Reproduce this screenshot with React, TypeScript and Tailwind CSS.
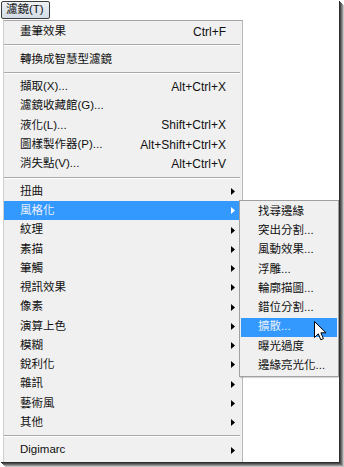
import React from "react";

type Item =
  | { kind: "sep" }
  | { kind: "row"; label: string; sc?: string; arrow?: boolean; hi?: boolean };

const R = (label: string, sc?: string, arrow?: boolean, hi?: boolean): Item => ({
  kind: "row",
  label,
  sc,
  arrow,
  hi,
});
const S: Item = { kind: "sep" };

const mainItems: Item[] = [
  R("畫筆效果", "Ctrl+F"),
  S,
  R("轉換成智慧型濾鏡"),
  S,
  R("擷取(X)...", "Alt+Ctrl+X"),
  R("濾鏡收藏館(G)..."),
  R("液化(L)...", "Shift+Ctrl+X"),
  R("圖樣製作器(P)...", "Alt+Shift+Ctrl+X"),
  R("消失點(V)...", "Alt+Ctrl+V"),
  S,
  R("扭曲", undefined, true),
  R("風格化", undefined, true, true),
  R("紋理", undefined, true),
  R("素描", undefined, true),
  R("筆觸", undefined, true),
  R("視訊效果", undefined, true),
  R("像素", undefined, true),
  R("演算上色", undefined, true),
  R("模糊", undefined, true),
  R("銳利化", undefined, true),
  R("雜訊", undefined, true),
  R("藝術風", undefined, true),
  R("其他", undefined, true),
  S,
  R("Digimarc", undefined, true),
];

const subItems = [
  "找尋邊緣",
  "突出分割...",
  "風動效果...",
  "浮雕...",
  "輪廓描圖...",
  "錯位分割...",
  "擴散...",
  "曝光過度",
  "邊緣亮光化...",
];

const FONT = "font-['Liberation_Sans','Noto_Sans_CJK_TC',sans-serif]";

function Arrow({ white }: { white?: boolean }) {
  return (
    <svg width="4" height="7" viewBox="0 0 4 7" className="block">
      <polygon points="0,0 4,3.5 0,7" fill={white ? "#ffffff" : "#000000"} />
    </svg>
  );
}

function MainRow({ item }: { item: Extract<Item, { kind: "row" }> }) {
  return (
    <div
      className={`flex h-[19.25px] items-center pl-[16px] ${
        item.hi ? "bg-[#3399ff] text-[#eaf1fb]" : "text-[#111111]"
      }`}
    >
      <span className="flex-1 text-[11.5px] leading-none whitespace-nowrap">{item.label}</span>
      {item.sc && <span className="text-[12px] leading-none whitespace-nowrap">{item.sc}</span>}
      <span className="flex w-[16px] items-center pl-[5px]">
        {item.arrow && <Arrow white={item.hi} />}
      </span>
    </div>
  );
}

function Sep() {
  return (
    <div className="flex h-[8.4px] flex-col justify-center pr-[2px]">
      <div className="h-px bg-[#a9a9a9]" />
      <div className="h-px bg-[#ffffff]" />
    </div>
  );
}

export default function App() {
  return (
    <div className={`relative h-[467px] w-[344px] bg-white ${FONT}`}>
      <div className="relative flex h-[462px] w-[339px] flex-col overflow-hidden bg-white shadow-[1px_1px_0_#2e2e2e,2px_2px_0_#4a4a4a,3px_3px_0_#6e6e6e,4px_4px_0_#969696,5px_5px_0_#c4c4c4]">
        <div className="pl-[1px] pt-[1px]">
          <div className="flex h-[18px] w-[49px] items-center rounded-[2px] border border-[#3c3c3c] bg-gradient-to-b from-[#eef2f6] to-[#d3dbe5] pl-[4px] text-[11.5px] leading-none text-[#111]">
            濾鏡(T)
          </div>
        </div>
        <div className="ml-[3px] mt-[1px] w-[240px] flex-1 border-l border-r border-t border-l-[#cfcfcf] border-r-[#b8b8b8] border-t-[#a4a4a4] bg-[#f0f0f0] pt-[1px]">
          {mainItems.map((it, i) =>
            it.kind === "sep" ? <Sep key={i} /> : <MainRow key={i} item={it} />
          )}
        </div>

        <div className="absolute left-[239px] top-[200px] w-[100px] border border-[#a0a0a0] bg-[#f0f0f0] py-px shadow-[1px_1px_1px_rgba(0,0,0,0.15)]">
          {subItems.map((s, i) => (
            <div key={i} className="px-px">
              <div
                className={`flex h-[19.25px] items-center pl-[17px] text-[11.5px] leading-none whitespace-nowrap ${
                  i === 6 ? "bg-[#3399ff] text-[#e6eefa]" : "text-[#111111]"
                }`}
              >
                {s}
              </div>
            </div>
          ))}
        </div>

        <svg
          className="absolute left-[314px] top-[321px]"
          width="13"
          height="20"
          viewBox="0 0 13 20"
        >
          <path
            d="M0.5 0.5 L0.5 16.5 L4.3 12.8 L6.8 18.8 L9.4 17.7 L6.9 11.8 L12 11.8 Z"
            fill="#ffffff"
            stroke="#000000"
            strokeWidth="1"
            strokeLinejoin="miter"
          />
        </svg>
      </div>
    </div>
  );
}
